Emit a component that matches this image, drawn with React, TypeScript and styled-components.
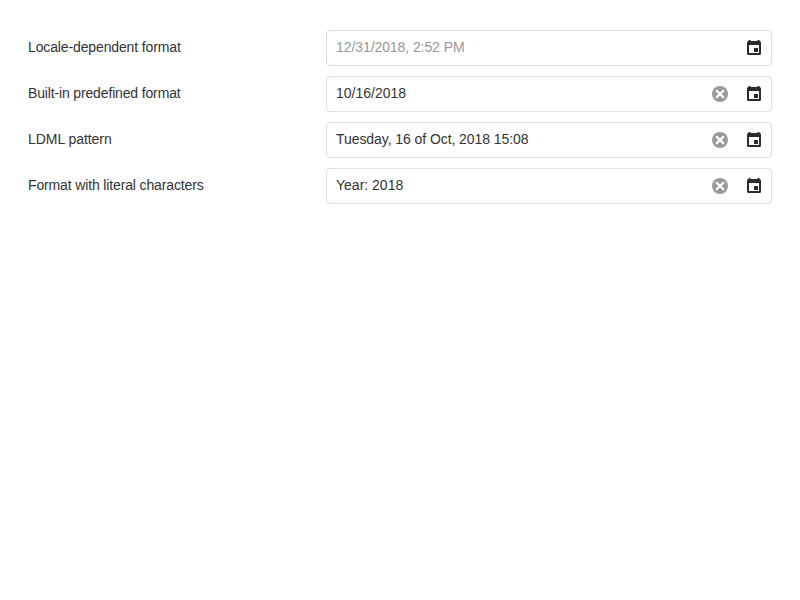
import React from "react";
import styled, { createGlobalStyle } from "styled-components";

const GlobalStyle = createGlobalStyle`
  * { box-sizing: border-box; }
  body {
    margin: 0;
    background: #fff;
    color: #333;
    font: 14px/20px "Nimbus Sans", "Liberation Sans", Arial, sans-serif;
  }
`;

const Form = styled.main`
  display: flex;
  flex-direction: column;
  gap: 10px;
  padding: 30px 28px;
`;

const Row = styled.div`
  display: grid;
  grid-template-columns: 298px 446px;
  height: 36px;
`;

const Label = styled.div<{ $tracking: number }>`
  padding-top: 7px;
  letter-spacing: ${(p) => p.$tracking}px;
`;

const Field = styled.div`
  display: flex;
  border: 1px solid #ddd;
  border-radius: 4px;
  background: #fff;
`;

const Value = styled.div<{ $placeholder?: boolean; $tracking: number }>`
  flex: 1;
  padding: 6px 9px;
  color: ${(p) => (p.$placeholder ? "#999" : "#333")};
  letter-spacing: ${(p) => p.$tracking}px;
`;

const IconButton = styled.div`
  display: flex;
  align-items: center;
  justify-content: center;
  width: 34px;
  height: 34px;
`;

const ClearIcon = () => (
  <svg width="18" height="18" viewBox="0 0 18 18">
    <circle cx="9" cy="9" r="8" fill="#999" />
    <path d="M5.2 5.2l7.6 7.6M12.8 5.2l-7.6 7.6" fill="none" stroke="#fff" strokeWidth="2.3" />
  </svg>
);

const CalendarIcon = () => (
  <svg width="18" height="18" viewBox="0 0 18 18">
    <path fill="#2b2b2b" fillRule="evenodd" d="M3.5 1h2v1h7V1h2v1A1.5 1.5 0 0 1 16 3.5v11a1.5 1.5 0 0 1-1.5 1.5h-11A1.5 1.5 0 0 1 2 14.500v-11A1.500 1.500 0 0 1 3.500 2zM4 6v8h10V6zm5 3h4v4H9z" />
  </svg>
);

const rows = [
  { label: "Locale-dependent format", labelTracking: -0.13, value: "12/31/2018, 2:52 PM", valueTracking: -0.08, empty: true },
  { label: "Built-in predefined format", labelTracking: -0.15, value: "10/16/2018", valueTracking: 0 },
  { label: "LDML pattern", labelTracking: -0.05, value: "Tuesday, 16 of Oct, 2018 15:08", valueTracking: -0.07 },
  { label: "Format with literal characters", labelTracking: -0.14, value: "Year: 2018", valueTracking: 0 },
];

export default function App() {
  return (
    <>
      <GlobalStyle />
      <Form>
        {rows.map((r) => (
          <Row key={r.label}>
            <Label $tracking={r.labelTracking}>{r.label}</Label>
            <Field>
              <Value $placeholder={r.empty} $tracking={r.valueTracking}>{r.value}</Value>
              {!r.empty && <IconButton><ClearIcon /></IconButton>}
              <IconButton><CalendarIcon /></IconButton>
            </Field>
          </Row>
        ))}
      </Form>
    </>
  );
}
